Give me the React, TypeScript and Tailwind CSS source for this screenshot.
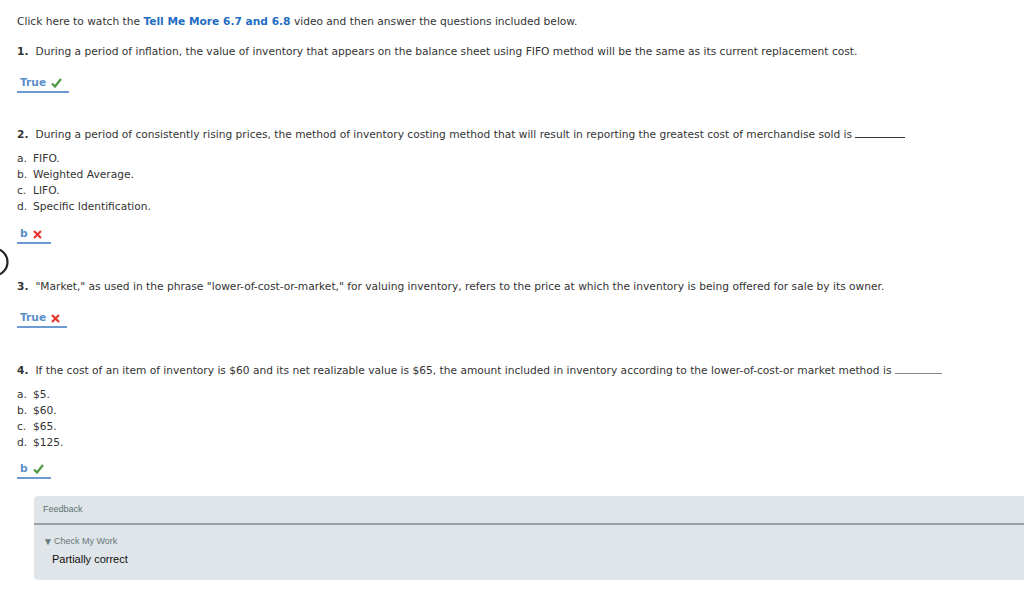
const body = { fontFamily: '"DejaVu Sans", Verdana, sans-serif' }
const arial = { fontFamily: '"Liberation Sans", Arial, sans-serif' }

function Check() {
  return (
    <svg width="11" height="10" viewBox="0 0 11 10" className="inline-block">
      <path d="M1 5.5 L4 8.5 L10 1" stroke="#4c9a3f" strokeWidth="2.2" fill="none" />
    </svg>
  )
}

function Cross() {
  return (
    <svg width="9" height="9" viewBox="0 0 9 9" className="inline-block">
      <path d="M1 1 L8 8 M8 1 L1 8" stroke="#e8372e" strokeWidth="2.2" fill="none" />
    </svg>
  )
}

function Answer({ label, ok, className }: { label: string; ok: boolean; className: string }) {
  return (
    <div className={className}>
      <div className="inline-flex h-[18px] min-w-[34px] items-center gap-[5px] border-b-2 border-[#6c9bd1] pl-[3px] pr-[7px] leading-[16px]">
        <span className="font-bold text-[#5b8fc9]">{label}</span>
        {ok ? <Check /> : <Cross />}
      </div>
    </div>
  )
}

function Options({ items, className }: { items: string[]; className: string }) {
  return (
    <div className={className}>
      {items.map((t, i) => (
        <div key={t} className="flex h-[16px] leading-[16px]">
          <span className="w-[16px]">{'abcd'[i]}.</span>
          <span>{t}</span>
        </div>
      ))}
    </div>
  )
}

function Question({ n, children, className }: { n: number; children: React.ReactNode; className: string }) {
  return (
    <div className={'h-[16px] whitespace-nowrap leading-[16px] ' + className}>
      <span className="font-bold">{n}.</span>
      <span className="ml-[7px]">{children}</span>
    </div>
  )
}

export default function App() {
  return (
    <div className="relative min-h-[598px] bg-white pl-[17px] pt-[14px] text-[10.65px] text-[#333]" style={body}>
      <svg className="absolute left-0 top-[247px]" width="10" height="30" viewBox="0 0 10 30">
        <path d="M-6 1.5 A13.5 13.5 0 0 1 -6 28.5" stroke="#222" strokeWidth="2.2" fill="none" />
      </svg>

      <div className="h-[16px] leading-[16px]">
        Click here to watch the <span className="font-bold text-[#1f6dc2]">Tell Me More 6.7 and 6.8</span> video and then answer the questions included below.
      </div>

      <Question n={1} className="mt-[14px]">
        During a period of inflation, the value of inventory that appears on the balance sheet using FIFO method will be the same as its current replacement cost.
      </Question>
      <Answer label="True" ok className="mt-[15px]" />

      <Question n={2} className="mt-[34px]">
        During a period of consistently rising prices, the method of inventory costing method that will result in reporting the greatest cost of merchandise sold is{' '}
        <span className="inline-block w-[50px] border-b border-[#333] align-baseline" />
      </Question>
      <Options className="mt-[8px]" items={['FIFO.', 'Weighted Average.', 'LIFO.', 'Specific Identification.']} />
      <Answer label="b" ok={false} className="mt-[11px]" />

      <Question n={3} className="mt-[35px]">
        "Market," as used in the phrase "lower-of-cost-or-market," for valuing inventory, refers to the price at which the inventory is being offered for sale by its owner.
      </Question>
      <Answer label="True" ok={false} className="mt-[15px]" />

      <Question n={4} className="mt-[35px]">
        If the cost of an item of inventory is $60 and its net realizable value is $65, the amount included in inventory according to the lower-of-cost-or market method is{' '}
        <span className="inline-block w-[47px] border-b border-[#888] align-baseline" />
      </Question>
      <Options className="mt-[8px]" items={['$5.', '$60.', '$65.', '$125.']} />
      <Answer label="b" ok className="mt-[10px]" />

      <div className="ml-[17px] mt-[17px] h-[84px] rounded-l-[4px] bg-[#dfe5e8]" style={arial}>
        <div className="flex h-[27px] items-center pl-[9px] text-[9px] text-[#5d7373]">Feedback</div>
        <div className="h-[2px] bg-[#9a9fa3]" />
        <div className="flex h-[23px] items-end pl-[9px] text-[9px] text-[#687878]">
          <span className="mr-[1px] text-[10px] leading-[12px]">▼</span>Check My Work
        </div>
        <div className="pl-[18px] pt-[3px] text-[11px] text-[#111]">Partially correct</div>
      </div>
    </div>
  )
}
